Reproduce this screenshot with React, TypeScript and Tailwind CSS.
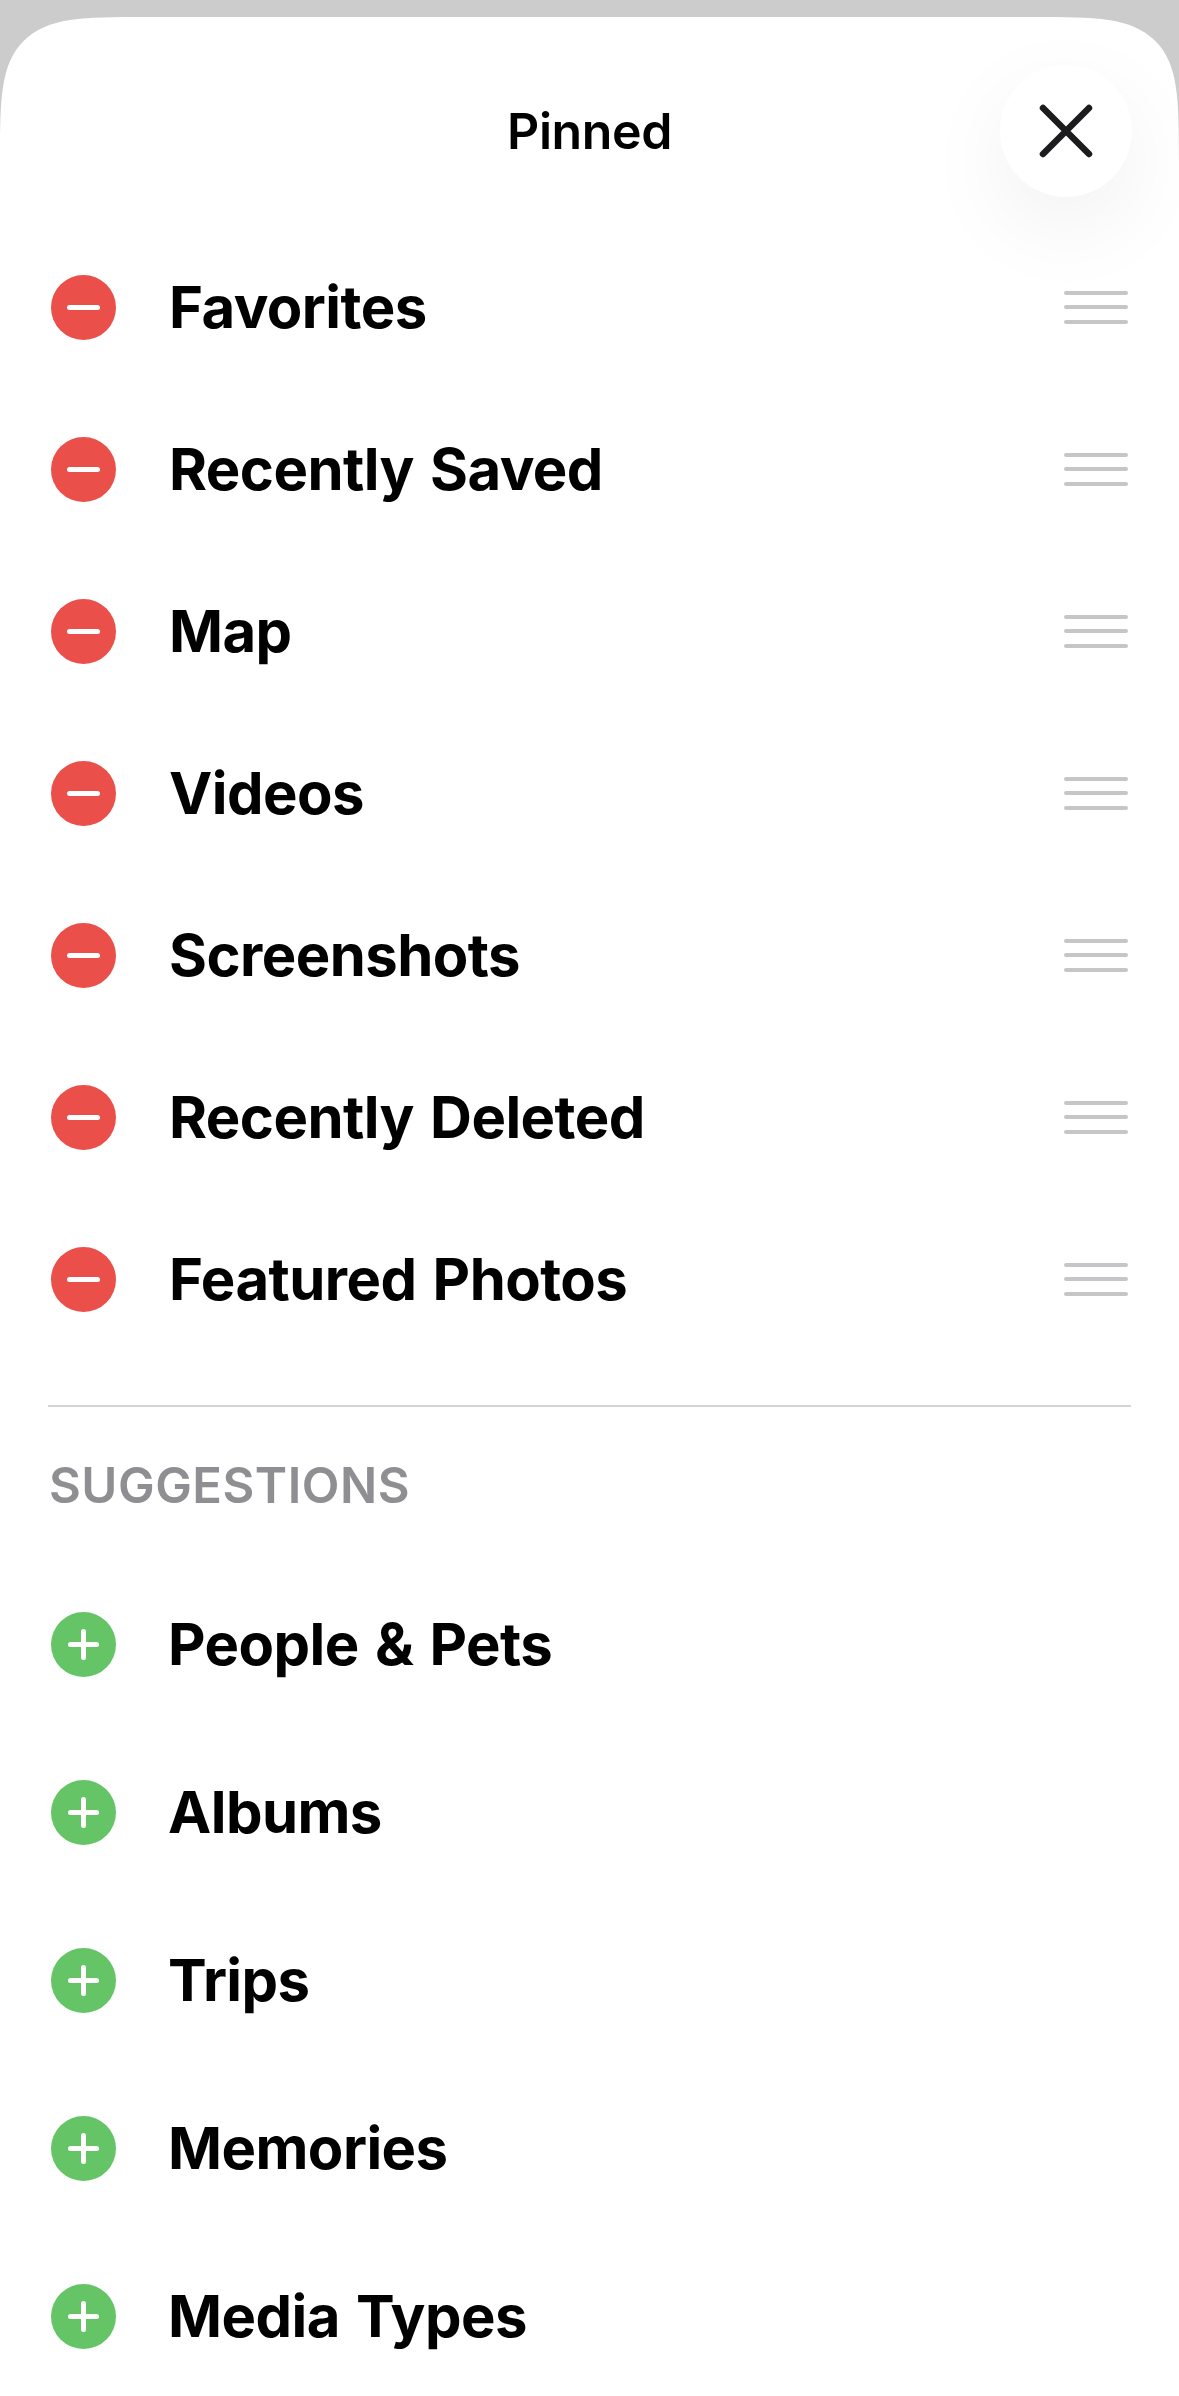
const pinned = ["Favorites", "Recently Saved", "Map", "Videos", "Screenshots", "Recently Deleted", "Featured Photos"];
const suggestions = ["People & Pets", "Albums", "Trips", "Memories", "Media Types"];

function CloseIcon() {
  return (
    <svg width="60" height="60" viewBox="0 0 60 60" fill="none" stroke="#1c1c1e" strokeWidth="6.5" strokeLinecap="round">
      <path d="M7 7 L53 53 M53 7 L7 53" />
    </svg>
  );
}

function Handle() {
  return (
    <div className="flex flex-col gap-[10.5px] w-[64px] mr-[3px]">
      <div className="h-[4px] rounded-full bg-[#c6c6c8]" />
      <div className="h-[4px] rounded-full bg-[#c6c6c8]" />
      <div className="h-[4px] rounded-full bg-[#c6c6c8]" />
    </div>
  );
}

function PinnedRow({ label }: { label: string }) {
  return (
    <div className="h-[162px] flex items-center">
      <div className="w-[65px] h-[65px] rounded-full bg-[#ea4f4a] flex items-center justify-center shrink-0">
        <div className="w-[33px] h-[5px] rounded-full bg-white" />
      </div>
      <span className="ml-[53px] flex-1 text-[58px] font-bold tracking-[-0.55px] [word-spacing:3px] text-black">{label}</span>
      <Handle />
    </div>
  );
}

function SuggestionRow({ label }: { label: string }) {
  return (
    <div className="h-[168px] flex items-center">
      <div className="relative w-[65px] h-[65px] rounded-full bg-[#65c466] flex items-center justify-center shrink-0">
        <div className="w-[31px] h-[5px] rounded-full bg-white" />
        <div className="absolute w-[5px] h-[31px] rounded-full bg-white" />
      </div>
      <span className="ml-[52px] flex-1 text-[58px] font-bold tracking-[-0.55px] [word-spacing:3px] text-black">{label}</span>
    </div>
  );
}

export default function App() {
  return (
    <div className="h-[2396px] overflow-hidden bg-[#cccccc] pt-[17px] font-['Inter',sans-serif]">
      <div className="relative h-full bg-white rounded-t-[150px] [corner-shape:squircle] pl-[51px] pr-[48px]">
        <div className="h-[209px] pt-[78px] -ml-[51px] -mr-[48px] text-center text-[50px] leading-[72px] font-semibold tracking-[-0.4px] text-black">
          Pinned
        </div>
        <button className="absolute top-[48px] right-[47px] w-[132px] h-[132px] rounded-full bg-white flex items-center justify-center shadow-[0_30px_90px_rgba(0,0,0,0.06)]">
          <CloseIcon />
        </button>

        {pinned.map((label) => (
          <PinnedRow key={label} label={label} />
        ))}

        <div className="mt-[45px] -ml-[3px] h-[2px] bg-[#d4d4d6]" />
        <div className="mt-[48px] h-[62px] leading-[62px] text-[49px] font-semibold tracking-[0.5px] text-[#8e8e93] -ml-[2px]">SUGGESTIONS</div>
        <div className="mt-[43px]">
          {suggestions.map((label) => (
            <SuggestionRow key={label} label={label} />
          ))}
        </div>
      </div>
    </div>
  );
}
